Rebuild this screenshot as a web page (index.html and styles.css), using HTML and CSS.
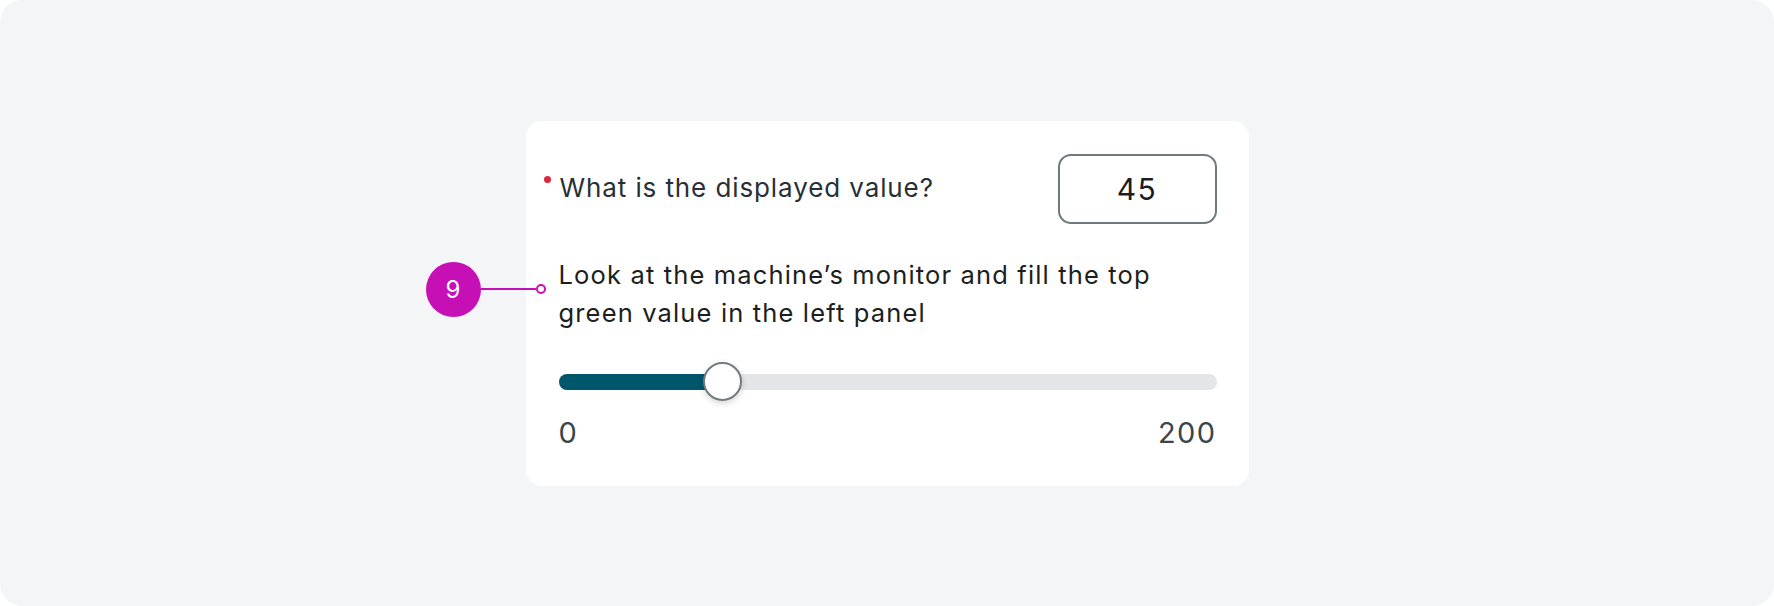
FILE: index.html
```html
<!DOCTYPE html>
<html lang="en">
<head>
<meta charset="utf-8">
<title>Question card</title>
<link rel="stylesheet" href="styles.css">
</head>
<body>
<div class="frame">
  <div class="card">
    <div class="question-row">
      <label class="question" for="value">What is the displayed value?</label>
      <div class="value-box" id="value">45</div>
    </div>
    <div class="desc-wrap">
      <div class="callout">
        <span class="badge">9</span>
        <span class="leader"></span>
        <span class="ring"></span>
      </div>
      <p class="desc">Look at the machine’s monitor and fill the top green value in the left panel</p>
    </div>
    <div class="slider">
      <div class="track">
        <div class="fill" style="width: 25%"></div>
        <div class="thumb" style="left: 25%"></div>
      </div>
    </div>
    <div class="range-labels">
      <span>0</span>
      <span>200</span>
    </div>
  </div>
</div>
</body>
</html>
```
FILE: styles.css
```css
* { box-sizing: border-box; }
html, body {
  margin: 0;
  padding: 0;
  background: #ffffff;
}
body {
  font-family: Inter, "Noto Sans", "Liberation Sans", sans-serif;
}
.frame {
  width: 1774px;
  height: 606px;
  background: #f4f5f7;
  border-radius: 22px;
  display: flex;
  align-items: center;
  justify-content: center;
}
.card {
  width: 723px;
  height: 365px;
  background: #ffffff;
  border-radius: 16px;
  padding: 33px 32px 0 33px;
  display: flex;
  flex-direction: column;
}
.question-row {
  display: flex;
  align-items: center;
  justify-content: space-between;
  height: 70px;
}
.question {
  position: relative;
  font-size: 26px;
  letter-spacing: 0.9px;
  color: #283035;
  padding-left: 1px;
  margin-top: -2px;
}
.question::before {
  content: "";
  position: absolute;
  left: -15px;
  top: 4px;
  width: 7px;
  height: 7px;
  border-radius: 50%;
  background: #e0263d;
}
.value-box {
  width: 159px;
  height: 70px;
  border: 2px solid #6f7a7e;
  border-radius: 13px;
  display: flex;
  align-items: center;
  justify-content: center;
  font-size: 30px;
  letter-spacing: 1.5px;
  color: #1b1d1f;
  font-family: Inter, "Noto Sans", "Liberation Sans", sans-serif;
}
.desc-wrap {
  position: relative;
  margin-top: 32px;
}
.desc {
  margin: 0;
  font-size: 25.5px;
  letter-spacing: 1.15px;
  line-height: 38px;
  color: #1c1e20;
  max-width: 640px;
}
.callout {
  position: absolute;
  left: -133px;
  top: 6px;
  display: flex;
  align-items: center;
}
.badge {
  width: 55px;
  height: 55px;
  flex: none;
  border-radius: 50%;
  background: #c70fb6;
  color: #ffffff;
  font-size: 24px;
  display: flex;
  align-items: center;
  justify-content: center;
}
.leader {
  width: 55px;
  height: 2px;
  flex: none;
  background: #c70fb6;
}
.ring {
  width: 10px;
  height: 10px;
  flex: none;
  border-radius: 50%;
  border: 2px solid #c70fb6;
  background: #ffffff;
}
.slider {
  margin-top: 30px;
  height: 40px;
  display: flex;
  align-items: center;
}
.track {
  position: relative;
  width: 100%;
  height: 16px;
  border-radius: 8px;
  background: #e3e5e6;
}
.fill {
  height: 100%;
  border-radius: 8px 0 0 8px;
  background: #00566b;
}
.thumb {
  position: absolute;
  top: 50%;
  width: 39px;
  height: 39px;
  margin-left: -20px;
  margin-top: -19.5px;
  border-radius: 50%;
  background: #ffffff;
  border: 2px solid #737b7e;
  box-shadow: 0 2px 6px rgba(0, 0, 0, 0.18);
}
.range-labels {
  margin-top: 13px;
  display: flex;
  justify-content: space-between;
  font-size: 29px;
  letter-spacing: 1.4px;
  color: #3b464b;
  padding-right: 0;
}
```
